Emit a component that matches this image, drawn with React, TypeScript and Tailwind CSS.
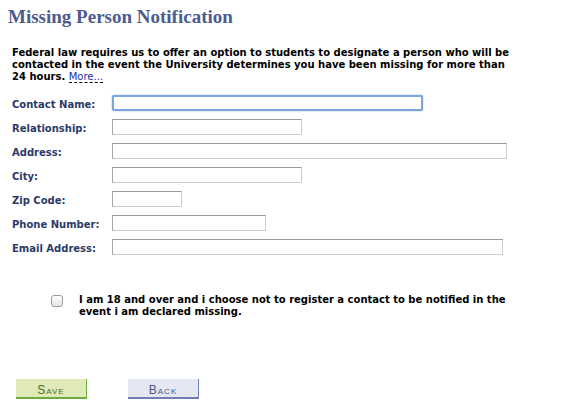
import { useState } from "react";

type Field = {
    label: string;
    width: string; // tailwind width class for the input
    focused?: boolean;
};

const FIELDS: Field[] = [
    { label: "Contact Name:", width: "w-[311px]", focused: true },
    { label: "Relationship:", width: "w-[190px]" },
    { label: "Address:", width: "w-[395px]" },
    { label: "City:", width: "w-[190px]" },
    { label: "Zip Code:", width: "w-[70px]" },
    { label: "Phone Number:", width: "w-[154px]" },
    { label: "Email Address:", width: "w-[391px]" },
];

export default function App() {
    const [optOut, setOptOut] = useState(false);

    return (
        <div className="w-[587px] h-[414px] bg-white overflow-hidden font-['DejaVu_Sans',Verdana,sans-serif]">
            <h1 className="pl-[8px] pt-[6px] text-[19px] leading-[22px] font-bold text-[#4d5c8f] font-['Liberation_Serif',Georgia,serif]">
                Missing Person Notification
            </h1>

            <p className="ml-[12px] mt-[19px] text-[10px] leading-[12px] font-bold text-black">
                Federal law requires us to offer an option to students to designate a person who will be
                <br />
                contacted in the event the University determines you have been missing for more than
                <br />
                24 hours.{" "}
                <a
                    href="#"
                    className="font-normal text-[#1a2ea8] no-underline border-b border-dashed border-black"
                >
                    More...
                </a>
            </p>

            <div className="mt-[8px] flex flex-col">
                {FIELDS.map((f) => (
                    <div key={f.label} className="flex items-center h-[24px]">
                        <label className="w-[112px] pl-[12px] pt-[3px] text-[10px] font-bold text-[#2b3a67]">
                            {f.label}
                        </label>
                        {f.focused ? (
                            <input
                                type="text"
                                className={`${f.width} h-[16px] border-2 border-[#7fa6dc] rounded-[2px] shadow-[0_0_2px_#8fb3e6] outline-none bg-white`}
                            />
                        ) : (
                            <input
                                type="text"
                                className={`${f.width} h-[16px] border border-t-[#9a9a9a] border-l-[#a8a8a8] border-r-[#cdcdcd] border-b-[#cdcdcd] outline-none bg-white`}
                            />
                        )}
                    </div>
                ))}
            </div>

            <label className="mt-[35px] ml-[51px] flex items-start gap-[16px] cursor-pointer">
                <input
                    type="checkbox"
                    checked={optOut}
                    onChange={(e) => setOptOut(e.target.checked)}
                    className="mt-[1px] w-[12px] h-[12px] shrink-0 appearance-none rounded-[3px] border border-[#9c9c9c] bg-gradient-to-b from-white to-[#e4e4e4] checked:bg-[#5b8fd6]"
                />
                <span className="text-[10px] leading-[12px] font-bold text-black">
                    I am 18 and over and i choose not to register a contact to be notified in the
                    <br />
                    event i am declared missing.
                </span>
            </label>

            <div className="mt-[61px] ml-[16px] flex gap-[41px] font-['Liberation_Sans',Arial,sans-serif]">
                <button
                    type="button"
                    className="w-[71px] h-[20px] pt-[2px] bg-[#dfeab8] border-r border-b-2 border-[#6cae3c] border-t-0 border-l-0 text-[12px] tracking-[1px] [font-variant:small-caps] text-[#4b6b2b]"
                >
                    Save
                </button>
                <button
                    type="button"
                    className="w-[71px] h-[20px] pt-[2px] bg-[#e5e8f2] border-r border-b-2 border-[#6f7fb5] border-t-0 border-l-0 text-[12px] tracking-[1px] [font-variant:small-caps] text-[#4a5488]"
                >
                    Back
                </button>
            </div>
        </div>
    );
}
